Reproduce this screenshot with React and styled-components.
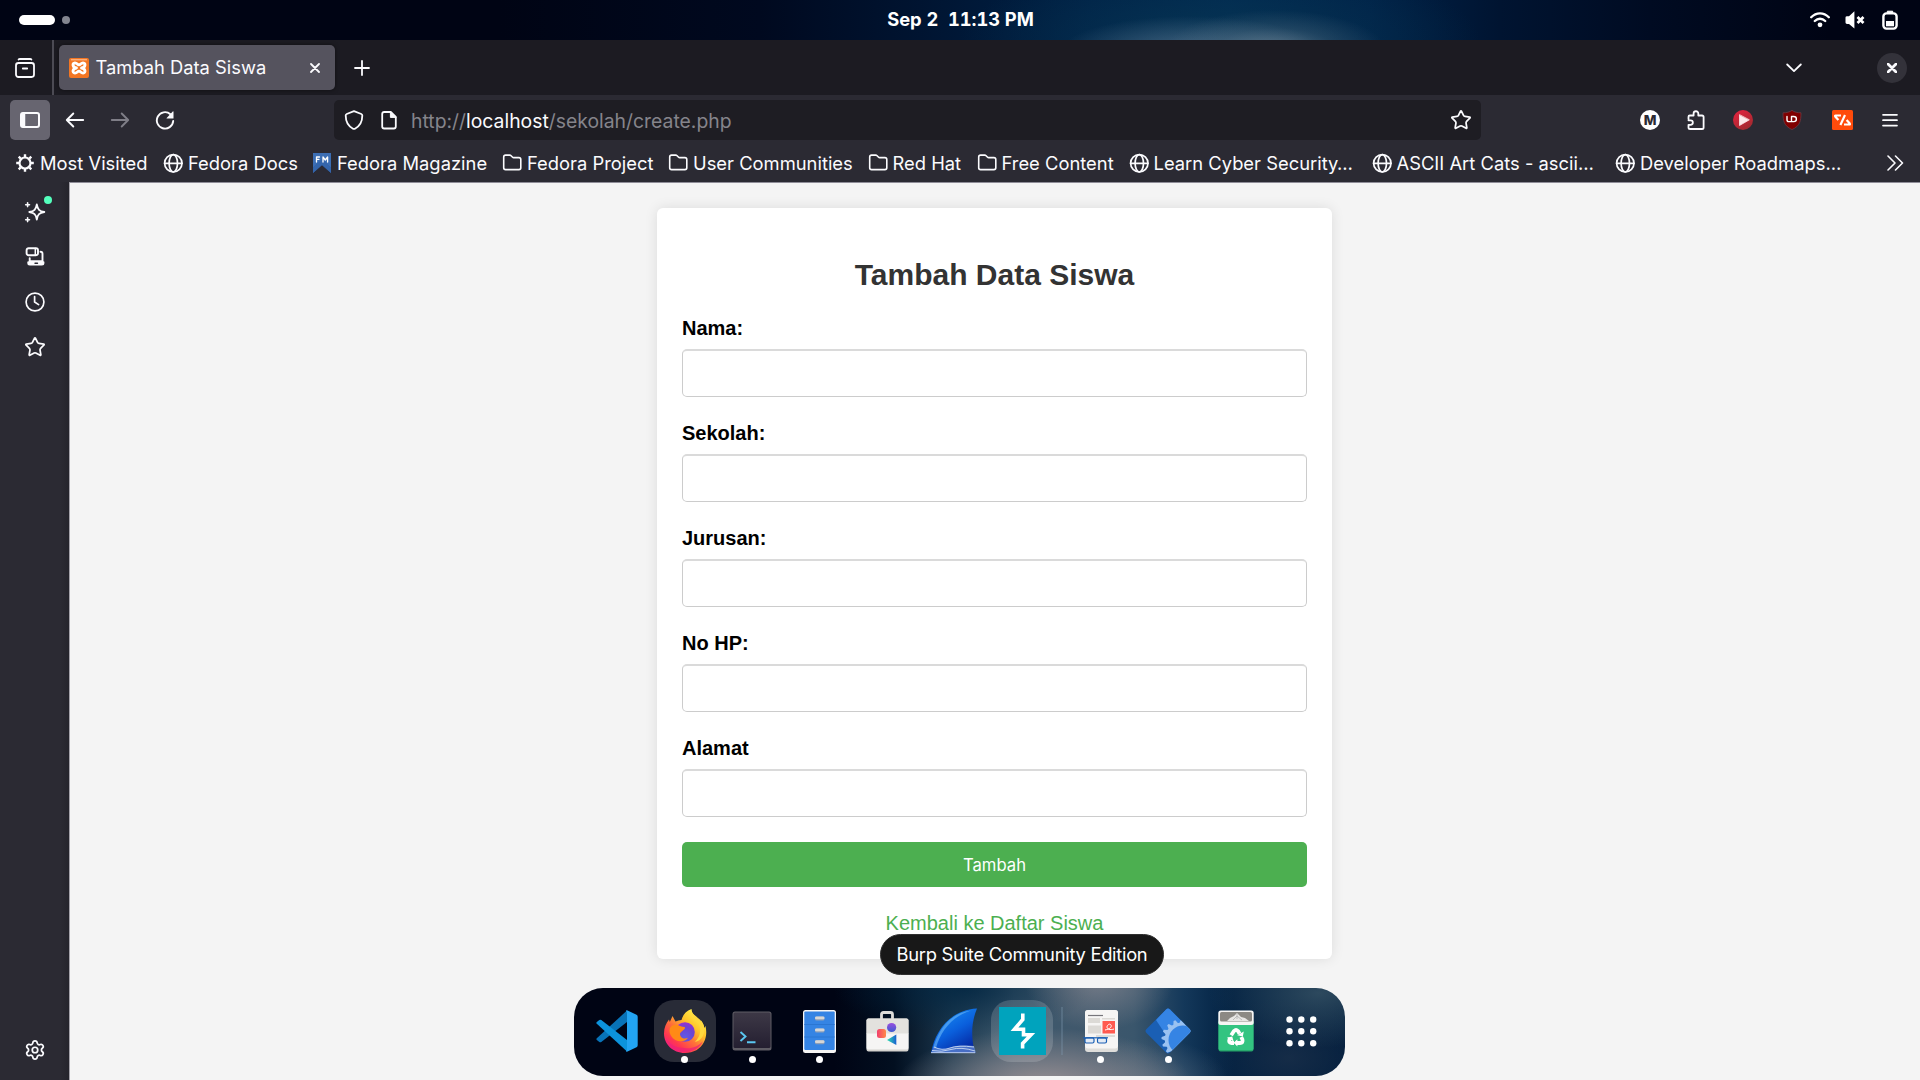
import React from "react";
import styled, { createGlobalStyle, css } from "styled-components";
import { Star, Settings } from "lucide-react";

const GlobalStyle = createGlobalStyle`
  * { box-sizing: border-box; }
  body { margin: 0; background: #000414; overflow: hidden; }
  svg { display: block; flex: none; }
`;

const uiFont = `Inter, "Noto Sans", sans-serif`;
const pageFont = `"Liberation Sans", Arial, sans-serif`;

/* ---------- desktop ---------- */

const Desktop = styled.div`
  position: relative;
  width: 1920px;
  height: 1080px;
  overflow: hidden;
  display: flex;
  flex-direction: column;
  font-family: ${uiFont};
`;

const TopBar = styled.header`
  height: 40px;
  flex: none;
  display: grid;
  grid-template-columns: 1fr auto 1fr;
  align-items: center;
  padding: 0 22px 0 23px;
  color: #fff;
  background:
    radial-gradient(ellipse 110px 40px at 1275px 50px, rgba(112, 134, 150, 0.75), rgba(90, 115, 135, 0.3) 55%, transparent),
    radial-gradient(ellipse 130px 36px at 1190px 52px, rgba(90, 118, 145, 0.75), transparent),
    radial-gradient(ellipse 260px 80px at 1220px 40px, rgba(8, 56, 84, 0.75), transparent),
    linear-gradient(90deg, #000414 0, #000414 500px, #00091f 760px, #001431 920px, #002247 1090px, #002850 1230px, #002248 1370px, #001431 1500px, #000b22 1650px, #000414 1830px);
`;

const Workspaces = styled.div`
  display: flex;
  align-items: center;
  gap: 7px;
  margin-left: -4px;
`;

const WorkspaceDot = styled.span`
  width: ${(p) => (p.$active ? 36 : 8)}px;
  height: ${(p) => (p.$active ? 10 : 8)}px;
  border-radius: 5px;
  background: ${(p) => (p.$active ? "#fff" : "#82858f")};
`;

const Clock = styled.time`
  font-size: 18.33px;
  font-weight: 700;
  letter-spacing: -0.06px;
  line-height: 38px;
  font-variant-numeric: tabular-nums;
  white-space: pre;
  padding-bottom: 2px;
`;

const StatusIcons = styled.div`
  display: flex;
  justify-content: flex-end;
  align-items: center;
  gap: 15px;
  svg:last-child { margin-left: 2px; }
`;

/* ---------- browser chrome ---------- */

const TabStrip = styled.div`
  height: 55px;
  flex: none;
  display: flex;
  align-items: center;
  background: #1c1b22;
  color: #fbfbfe;
`;

const ArchiveCell = styled.div`
  width: 54px;
  height: 55px;
  display: flex;
  align-items: center;
  padding-left: 15px;
  border-right: 2px solid #4c4b54;
`;

const Tab = styled.div`
  width: 276px;
  height: 45px;
  margin-left: 5px;
  padding: 0 15px 0 10px;
  display: flex;
  align-items: center;
  border-radius: 5px;
  background: #55535e;
  box-shadow: 0 0 4px rgba(0, 0, 0, 0.5);
`;

const TabTitle = styled.span`
  flex: 1;
  margin-left: 6.5px;
  padding-bottom: 1px;
  font-size: 18.33px;
  line-height: 26px;
  white-space: nowrap;
`;

const NewTab = styled.div`
  flex: 1;
  padding-left: 19px;
`;

const CloseWindow = styled.div`
  width: 30px;
  height: 30px;
  margin: 0 13px 0 75px;
  border-radius: 50%;
  background: #33323a;
  display: grid;
  place-items: center;
`;

const NavBar = styled.div`
  height: 50px;
  flex: none;
  display: flex;
  align-items: center;
  padding: 0 8px 0 10px;
  background: #2b2a33;
  color: #fbfbfe;
`;

const NavButton = styled.div`
  width: 40px;
  height: 40px;
  margin-right: 5px;
  display: grid;
  place-items: center;
  border-radius: 5px;
  background: ${(p) => (p.$active ? "#676570" : "transparent")};
  color: ${(p) => (p.$disabled ? "#7f7e87" : "inherit")};
`;

const UrlBar = styled.div`
  width: 1147px;
  height: 40px;
  margin-left: 144px;
  padding: 0 9px 0 10px;
  display: flex;
  align-items: center;
  border-radius: 5px;
  background: #1e1d23;
`;

const UrlText = styled.span`
  flex: 1;
  margin-left: 14px;
  padding-top: 1px;
  font-size: 19.36px;
  line-height: 26px;
  color: #85848b;
  white-space: nowrap;
  b { font-weight: 400; color: #fbfbfe; }
`;

const Extensions = styled.div`
  flex: 1;
  display: flex;
  align-items: center;
  justify-content: flex-end;
`;

const ExtSlot = styled.div`
  width: ${(p) => p.$w}px;
  margin-left: ${(p) => p.$ml || 0}px;
  display: grid;
  place-items: center;
`;

const LetterBadge = styled.span`
  width: 20px;
  height: 20px;
  border-radius: 50%;
  background: #fff;
  color: #2b2a33;
  font-size: 13.5px;
  font-weight: 800;
  line-height: 20px;
  text-align: center;
`;

const Bookmarks = styled.div`
  height: 37px;
  flex: none;
  display: flex;
  align-items: center;
  padding: 0 16px 1px 15px;
  background: #2b2a33;
  color: #fbfbfe;
`;

const Bookmark = styled.div`
  width: ${(p) => p.$w}px;
  flex: none;
  display: flex;
  align-items: center;
  gap: 5px;
  font-size: 18.33px;
  letter-spacing: 0.02px;
  line-height: 26px;
  white-space: nowrap;
`;

const BookmarkIcon = styled.span`
  width: 20px;
  flex: none;
  display: grid;
  place-items: center;
`;

const Overflow = styled.div`
  flex: 1;
  display: flex;
  justify-content: flex-end;
`;

const Body = styled.div`
  flex: 1;
  min-height: 0;
  display: flex;
  background: #2b2a33;
`;

const Sidebar = styled.nav`
  width: 69px;
  flex: none;
  display: flex;
  flex-direction: column;
  align-items: center;
  padding: 8px 0 8px 0;
  color: #fbfbfe;
  background: linear-gradient(90deg, #2b2a33 60px, #25242c 69px);
`;

const SideItem = styled.div`
  position: relative;
  width: 40px;
  height: 44.8px;
  display: grid;
  place-items: center;
  ${(p) => p.$last && css`margin-top: auto;`}
`;

const NoticeDot = styled.span`
  position: absolute;
  top: 6px;
  right: 3px;
  width: 8px;
  height: 8px;
  border-radius: 50%;
  background: #54ffbd;
`;

/* ---------- web page ---------- */

const Page = styled.main`
  flex: 1;
  display: flex;
  justify-content: center;
  align-items: flex-start;
  padding: 25px 1px 0 0;
  border-top: 1px solid #8f8d98;
  border-left: 1px solid #a5a3ab;
  background: #f4f4f4;
  font-family: ${pageFont};
`;

const Card = styled.form`
  width: 675px;
  height: 751px;
  padding: 25px;
  background: #fff;
  border-radius: 6px;
  box-shadow: 0 0 12.5px rgba(0, 0, 0, 0.1);
`;

const Title = styled.h2`
  margin: 25px 0;
  font-size: 30px;
  line-height: 34px;
  font-weight: 700;
  text-align: center;
  color: #333;
`;

const Field = styled.div`
  height: 105px;
`;

const Label = styled.label`
  display: block;
  padding-bottom: 10px;
  font-size: 20px;
  line-height: 22px;
  font-weight: 700;
  color: #000;
`;

const Input = styled.input`
  display: block;
  width: 100%;
  height: 48px;
  padding: 12px;
  border: 1px solid #ccc;
  border-top: 2px solid #dadada;
  border-radius: 5px;
  background: #fff;
  outline: none;
`;

const Submit = styled.button`
  display: block;
  width: 100%;
  height: 45px;
  border: 0;
  border-radius: 5px;
  background: #4caf50;
  color: #fff;
  font-family: ${uiFont};
  font-size: 16.67px;
  line-height: 20px;
`;

const BackLink = styled.a`
  display: block;
  margin-top: 25px;
  font-size: 20px;
  line-height: 23px;
  text-align: center;
  color: #4caf50;
  text-decoration: none;
`;

/* ---------- dock ---------- */

const DockLayer = styled.div`
  position: absolute;
  left: 574px;
  top: 988px;
`;

const Dock = styled.div`
  width: 771px;
  height: 88px;
  padding: 0 9.5px;
  display: flex;
  align-items: center;
  border-radius: 29px;
  background:
    radial-gradient(ellipse 75px 50px at 525px -8px, rgba(130, 132, 142, 0.8), transparent),
    radial-gradient(ellipse 150px 60px at 470px 100px, rgba(160, 148, 150, 0.95), rgba(140, 136, 142, 0.6) 50%, transparent),
    radial-gradient(ellipse 80px 45px at 575px 95px, rgba(95, 112, 128, 0.7), transparent),
    radial-gradient(ellipse 110px 55px at 745px 5px, rgba(60, 88, 105, 0.75), transparent),
    radial-gradient(ellipse 90px 60px at 715px 70px, rgba(30, 50, 75, 0.7), transparent),
    radial-gradient(ellipse 130px 45px at 390px 0, rgba(2, 38, 66, 0.85), transparent),
    linear-gradient(90deg, #000414 0, #000414 260px, #020f20 320px, #1d3a50 380px, #3c586c 440px, #40586c 500px, #3a566c 560px, #14385a 610px, #001f40 660px, #001c3c 771px);
`;

const DockItem = styled.div`
  position: relative;
  width: ${(p) => p.$w || 67.5}px;
  flex: none;
  height: 88px;
  display: grid;
  place-items: center;
`;

const DockTile = styled.div`
  width: 62px;
  height: 62px;
  margin-bottom: 2px;
  display: grid;
  place-items: center;
  border-radius: 20px;
  background: ${(p) => p.$tint || "transparent"};
`;

const RunningDot = styled.span`
  position: absolute;
  left: calc(50% - 3.5px);
  top: 68px;
  width: 7px;
  height: 7px;
  border-radius: 50%;
  background: #fff;
`;

const DockDivider = styled.div`
  width: 2px;
  height: 48px;
  margin: 0 4.5px 2px 4.5px;
  background: rgba(130, 155, 180, 0.3);
`;

const Tooltip = styled.div`
  position: absolute;
  left: 306px;
  top: -54px;
  width: 284px;
  height: 41px;
  border-radius: 20.5px;
  border: 1px solid #303030;
  background: #181818;
  color: #fff;
  font-size: 18.33px;
  letter-spacing: -0.27px;
  line-height: 38px;
  text-align: center;
  white-space: nowrap;
`;

/* ---------- icons ---------- */

const Svg = ({ w = 20, h = 20, vb, children, sw = 1.6 }) => (
  <svg width={w} height={h} viewBox={vb || `0 0 ${w} ${h}`} fill="none" stroke="currentColor" strokeWidth={sw} strokeLinecap="round" strokeLinejoin="round">
    {children}
  </svg>
);

const WifiIcon = () => (
  <Svg sw={2.3}>
    <path d="M1.2 7.2C6.2 2 13.8 2 18.8 7.2M4.8 11c3-3 7.4-3 10.4 0" />
    <circle cx="10" cy="14.8" r="2.4" fill="currentColor" stroke="none" />
  </Svg>
);
const MuteIcon = () => (
  <Svg>
    <path d="M.5 7.6Q.5 6.2 2 6.2h2L9.4 1.2V18.6L4 14H2Q.5 14 .5 12.6z" fill="currentColor" stroke="none" />
    <path d="M12.500 7l6 6M18.500 7l-6 6" strokeWidth="2.7" strokeLinecap="butt" />
  </Svg>
);
const BatteryIcon = () => (
  <Svg w={16} sw={2.4}>
    <rect x="1.4" y="3.4" width="13.2" height="15.2" rx="3" />
    <path d="M5.3 3V1.2h5.4V3z" fill="currentColor" strokeWidth="1" />
    <rect x="4" y="11" width="8" height="5.3" fill="currentColor" stroke="none" />
  </Svg>
);
const ArchiveIcon = () => (
  <Svg sw={1.8}>
    <path d="M3.6 1.6Q4 1 5 1h10q1 0 1.400.6M7.8 10.5h4.4" />
    <rect x="1" y="5" width="18" height="14" rx="2.4" />
  </Svg>
);
const XamppIcon = () => (
  <Svg>
    <rect width="20" height="20" rx="2" fill="#f37623" stroke="none" />
    <path d="M2.4 1.8h15.2" stroke="#ffc69d" strokeWidth="1" />
    <path d="M7.500 10C3.500 9.600 2.800 5 6 4.800c2.200 0 2.400 2 4 2s1.800-2 4-2c3.200.2 2.500 4.800-1.500 5.200 4 .4 4.700 4.900 1.500 5.100-2.200 0-2.400-1.900-4-1.900s-1.800 1.900-4 1.900C2.800 14.900 3.500 10.400 7.500 10z" stroke="#fff" strokeWidth="2.800" />
  </Svg>
);
const CloseIcon = ({ s = 10, sw = 1.8 }) => (
  <Svg w={s} h={s} vb="0 0 10 10" sw={sw}><path d="M1 1l8 8M9 1L1 9" /></Svg>
);
const PlusIcon = () => <Svg w={16} h={16} sw={1.8}><path d="M8 1v14M1 8h14" /></Svg>;
const ChevronIcon = () => <Svg w={16} h={10} sw={1.8}><path d="M1.200 1.500l6.800 6.600 6.800-6.600" /></Svg>;
const PanelIcon = () => (
  <Svg w={20} h={16} sw={2}>
    <rect x="1" y="1" width="18" height="14" rx="2" />
    <path d="M1 2.500Q1 1 2.500 1H5v14H2.500Q1 15 1 13.500z" fill="currentColor" strokeWidth="0.500" />
  </Svg>
);
const BackIcon = () => <Svg w={20} h={16} sw={1.9}><path d="M18.200 8H2M8.300 1.500L1.800 8l6.500 6.500" /></Svg>;
const ForwardIcon = () => <Svg w={20} h={16} sw={1.9}><path d="M1.800 8H18M11.700 1.500L18.200 8l-6.500 6.500" /></Svg>;
const ReloadIcon = () => (
  <Svg sw={1.9}>
    <path d="M15.400 4.200A8.200 8.200 0 1 0 18.200 11" />
    <path d="M18.500 1.800v6.400q0 .3-.3.300h-6.200q-.8 0-.3-.500l6-6.400q.8-.6.800.2z" fill="currentColor" stroke="none" />
  </Svg>
);
const ShieldIcon = () => (
  <Svg sw={1.8}>
    <path d="M10 1.200L17.300 4q1 .4 1 1.500c0 6-2.300 10.500-7.300 13.200q-1 .5-2 0C4 16 1.700 11.500 1.700 5.500q0-1.100 1-1.500z" />
  </Svg>
);
const PageIcon = () => (
  <Svg w={16} sw={1.8}>
    <path d="M3.200 2h6.600L14.800 7v9.500q0 2-2 2H3.200q-2 0-2-2V4q0-2 2-2z" />
    <path d="M9.400 2v5.400h5.400z" fill="currentColor" strokeWidth="1" />
  </Svg>
);
const PuzzleIcon = () => (
  <Svg w={18} sw={1.8}>
    <path d="M1.500 9V6.800Q1.500 5.500 2.800 5.500H6.600V3.600a2.300 2.300 0 0 1 4.700 0V5.500H15q1.600 0 1.600 1.600V17.400q0 1.600-1.600 1.600H3.100q-1.600 0-1.600-1.600V14.800H3.600a2.200 2.200 0 0 0 0-4.500H1.500" />
  </Svg>
);
const PlayIcon = () => (
  <Svg>
    <defs><linearGradient id="play" x1="0" y1="0" x2="0.600" y2="1"><stop offset="0" stopColor="#e8213f" /><stop offset="1" stopColor="#a32a30" /></linearGradient></defs>
    <circle cx="10" cy="10" r="10" fill="url(#play)" stroke="none" />
    <path d="M6.500 5v10.500L16 10z" fill="#fbe9ea" stroke="#fbe9ea" strokeWidth=".8" />
  </Svg>
);
const BlockIcon = () => (
  <Svg>
    <path d="M10 .4C7.500 2.200 4.500 2.800 1 2.800c0 8 .8 13 9 16.800 8.200-3.800 9-8.800 9-16.800-3.500 0-6.500-.6-9-2.400z" fill="#800000" stroke="#6a3a44" strokeWidth=".8" />
    <path d="M5 6.500v3.200q0 1.900 1.900 1.900H9.500V6.500h2.200q2.700 0 2.700 2.500t-2.700 2.600H9.500" stroke="#fff" strokeWidth="1.400" />
  </Svg>
);
const ProxyIcon = () => (
  <Svg w={21}>
    <rect width="21" height="20" rx="1.500" fill="#ff4b0b" stroke="none" />
    <path d="M9 5.500H3.600q-.8 0-.4.900L6.400 10M13 5L8.400 15M12 14.500h5.400q.8 0 .4-.9L14.600 10" stroke="#fff" strokeWidth="2.200" strokeLinecap="butt" />
  </Svg>
);
const MenuIcon = () => <Svg w={16} h={14} sw={1.7}><path d="M1 1.800h14M1 7.200h14M1 12.600h14" /></Svg>;
const CogIcon = () => (
  <Svg>
    <circle cx="10" cy="10" r="5.500" strokeWidth="2.200" />
    <path d="M10 4V1.200M10 16v2.800M4 10H1.200M16 10h2.800M5.700 5.700l-2-2M14.300 14.300l2 2M5.700 14.300l-2 2M14.300 5.700l2-2" strokeWidth="2.400" strokeLinecap="butt" />
  </Svg>
);
const GlobeIcon = () => (
  <Svg sw={1.7}>
    <circle cx="10.300" cy="10.300" r="8.700" />
    <ellipse cx="10.300" cy="10.300" rx="4.200" ry="8.700" />
    <path d="M1.600 10.300h17.400" />
  </Svg>
);
const FolderIcon = () => (
  <Svg sw={1.6}>
    <path d="M3.600 2.100h4q.9 0 1.500.6l1.500 1.500q.4.400 1 .4h5.300q1.900 0 1.900 1.900v8.200q0 1.900-1.900 1.900H3.600q-1.900 0-1.900-1.900V4q0-1.900 1.900-1.900z" />
  </Svg>
);
const RibbonIcon = () => (
  <Svg w={18}>
    <path d="M0 0h18v20L9 12 0 20z" fill="#3c6eb4" stroke="none" />
    <path d="M0 20v-5l9-8 9 8v5l-9-8z" fill="#294172" stroke="none" />
    <path d="M0 14.500L9 6l9 8.500V20L9 12 0 20z" fill="#3465ab" stroke="none" />
    <path d="M3.500 9V4H6.500M3.500 6.300h2.500M10 9V4l2.300 3 2.300-3V9" stroke="#fff" strokeWidth="1.300" />
  </Svg>
);
const DoubleChevron = () => <Svg w={18} h={16} sw={1.6}><path d="M2 1l7 7-7 7M9.500 1l7 7-7 7" /></Svg>;
const SparkIcon = () => (
  <Svg w={22} h={22} sw={1.8}>
    <path d="M12.800 3.500c.9 5 2.500 6.600 7.500 7.500-5 .9-6.600 2.500-7.500 7.500-.9-5-2.500-6.600-7.500-7.500 5-.9 6.600-2.500 7.500-7.500z" />
    <path d="M3.600 1.800v3.800M1.700 3.700h3.800M3.600 16.800v3.800M1.700 18.700h3.800" strokeWidth="1.600" />
  </Svg>
);
const DevicesIcon = () => (
  <Svg sw={1.9}>
    <rect x="1.600" y="1.200" width="11.400" height="7" rx="2" />
    <path d="M10.300 1.500v6.400" strokeWidth="1.500" />
    <path d="M15.500 4.800q2 0 2 2v7.400H4.700v-3" />
    <path d="M3.600 14.300h15q.8 0 .8.800v1q0 2.500-2.500 2.500H4.800q-2.500 0-2.500-2.500v-1q0-.8 1.300-.8z" fill="currentColor" stroke="none" />
    <path d="M10 16.200h2.500" stroke="#2b2a33" strokeWidth="1.400" />
  </Svg>
);
const HistoryIcon = () => (
  <Svg sw={1.7}><circle cx="10" cy="10" r="8.900" /><path d="M9.600 4.500V10l4 2.600" /></Svg>
);

/* ---------- dock artwork ---------- */

const Art = ({ w, h, children }) => <svg width={w} height={h} viewBox={`0 0 ${w} ${h}`}>{children}</svg>;

const VsCodeArt = () => (
  <Art w={42} h={42}>
    <path d="M31 .5L.8 28.200q-.9.900 0 1.800l2.500 2q1 .7 2 0L31 12z" fill="#0873b8" />
    <path d="M31 41.500L.8 13.800q-.9-.9 0-1.800l2.500-2q1-.7 2 0L31 30z" fill="#0c93dc" />
    <path d="M31 .3l9.500 4.500q1.200.6 1.200 2v28.400q0 1.400-1.200 2L31 41.700q-.6.200-1-.4l1-2V2.700L30 .7q.4-.6 1-.4z" fill="#22a4f2" />
  </Art>
);
const FirefoxArt = () => (
  <Art w={44} h={46}>
    <defs>
      <linearGradient id="fx" x1="0.850" y1="0.100" x2="0.150" y2="0.950">
        <stop offset="0" stopColor="#fff44f" /><stop offset=".3" stopColor="#ffc429" /><stop offset=".55" stopColor="#ff7139" /><stop offset=".8" stopColor="#ff3750" /><stop offset="1" stopColor="#f0198a" />
      </linearGradient>
      <radialGradient id="fxp" cx=".5" cy=".75" r=".8"><stop offset="0" stopColor="#5f5ae8" /><stop offset=".6" stopColor="#6e43d0" /><stop offset="1" stopColor="#a02bd4" /></radialGradient>
    </defs>
    <path d="M9.500 8l3 5.500q3-1.500 6-1.500C20 6.500 23 3 28.500 1c.3 4 2.500 6 5 8.500 1.500 1.500 3 3.500 4 5.500l.6-2.500c1.600 2 3 5.500 3 7.500l1.400-2C43.800 23.500 43.500 29 41 34 37.500 41 30.500 45 22 45 9.500 45 1 36 1 25.500c0-6 2-10 5-14l.8 2.500z" fill="url(#fx)" />
    <path d="M3 30c3 9 10 14 19 14 8 0 15-4 18-11-5 6-12 8-18 7C12 40 6 36 3 30z" fill="#ee2277" opacity=".75" />
    <circle cx="22" cy="24" r="9.800" fill="url(#fxp)" />
    <path d="M7 20c2-4 7-4 10-2 2 1.200 5 .3 5 1.800 0 2-4 3.500-5 6 0 4 4 6 8 4-3 5-13 5-17-2-1.500-3-2-5-1-7.800z" fill="#ff8a16" />
    <path d="M28 3c1 7 8 9 9 17 1 6-2 11-5 14 8-2 10-9 9-16-1-3-3-6-6-8-3-3-6-4-7-7z" fill="#ffd83d" />
  </Art>
);
const TerminalArt = () => (
  <Art w={40} h={40}>
    <rect x="0.500" y="0.500" width="39" height="39" rx="2.500" fill="#5e5c64" />
    <rect x="1.500" y="1.500" width="37" height="35.500" rx="1.500" fill="url(#term)" />
    <defs><linearGradient id="term" x2="0" y2="1"><stop stopColor="#3d3846" /><stop offset="1" stopColor="#241f31" /></linearGradient></defs>
    <path d="M8.500 21l5 4.500-5 4.500M15 31.200h8.500" fill="none" stroke="#5ac8f2" strokeWidth="1.900" />
  </Art>
);
const FilesArt = () => (
  <Art w={33} h={43}>
    <rect width="33" height="43" rx="2.500" fill="#f6f5f4" />
    <rect x="1.300" y="1.500" width="30.400" height="38.500" rx="1" fill="#3584e4" />
    <path d="M1.300 14.500h30.400M1.300 27h30.400" stroke="#2b76d2" />
    {[6.5, 18.5, 30.3].map((y) => (
      <g key={y}><rect x="12" y={y} width="9.500" height="4" rx="1.600" fill="#8fa0b8" /><rect x="12" y={y} width="9.500" height="2.800" rx="1.300" fill="#d6d6d6" /></g>
    ))}
  </Art>
);
const SoftwareArt = () => (
  <Art w={43} h={41}>
    <defs><linearGradient id="sw1" x2="1"><stop stopColor="#f2406d" /><stop offset="1" stopColor="#ff8a4a" /></linearGradient><linearGradient id="sw2" x2="0" y2="1"><stop stopColor="#9a4fe0" /><stop offset="1" stopColor="#3c5bd0" /></linearGradient><linearGradient id="sw3" x2="1"><stop stopColor="#2ee0b0" /><stop offset="1" stopColor="#1a5fd0" /></linearGradient></defs>
    <path d="M15.500 9V3.500q0-2 2-2h7q2 0 2 2V9" fill="none" stroke="#deddda" strokeWidth="2.800" />
    <rect x=".5" y="7.500" width="42" height="33" rx="2" fill="#d5d3cf" />
    <path d="M.5 9.500q0-2 2-2h38q2 0 2 2V23H.5z" fill="#e3e2de" />
    <path d="M.5 22.500h42V37q0 1.500-2 1.500h-38q-2 0-2-1.500z" fill="#f6f5f4" />
    <rect x="11" y="18" width="9" height="9" rx="2.500" fill="url(#sw1)" />
    <circle cx="25.600" cy="16.500" r="4.600" fill="url(#sw2)" />
    <path d="M21 29l9.300-5.500v10.500z" fill="url(#sw3)" />
  </Art>
);
const WiresharkArt = () => (
  <Art w={47} h={46}>
    <defs><linearGradient id="fin" x1=".2" y1="0" x2=".8" y2="1"><stop stopColor="#1990f5" /><stop offset=".5" stopColor="#0a5fdc" /><stop offset="1" stopColor="#04209a" /></linearGradient></defs>
    <path d="M0 45C4 22 20 2 46 .5c-6 14-6 30-2 44.500z" fill="url(#fin)" />
    <path d="M2 40C8 20 20 5 40 2.500 22 8 10 22 5 40z" fill="#69b8f8" opacity=".6" />
    <path d="M0 45q1-3 3-6 7 4 15 1 9-4 25-2l2 7z" fill="#5f86d0" opacity=".75" />
    <path d="M3 39q8 4 16 1t24-1M1 42.500q9 2 19-1t24 1.500M0 44.700h44" stroke="#dbe6f7" strokeWidth=".8" fill="none" />
  </Art>
);
const BurpArt = () => (
  <Art w={47} h={48}>
    <rect width="47" height="48" fill="#00a3bd" />
    <path d="M23.800 6.500v6L15.500 22.200h9v5.600h7.500L23.600 36.500v5" fill="none" stroke="#fff" strokeWidth="3.600" strokeLinejoin="miter" />
  </Art>
);
const PapersArt = () => (
  <Art w={36} h={42}>
    <rect x="2" width="33" height="42" rx="3" fill="#deddda" />
    <rect x="2" width="33" height="38.500" rx="3" fill="#f6f5f4" />
    <path d="M5 5.500h15" stroke="#77767b" strokeWidth="1.200" />
    <path d="M5 8h12v5H5zM19 8h13v1.500H19zM5 15.500h13v8H5z" fill="#dcdad6" />
    <rect x="19.500" y="11" width="12.500" height="12.500" fill="#ff5a50" />
    <path d="M22 20c5-1 7-3 6-5s-4 0-4 2 3 3.500 7 2" stroke="#fff" strokeWidth="1" fill="none" />
    <path d="M13 26h19" stroke="#d5d3cf" strokeWidth="1.500" />
    <g fill="#e3ebf5" stroke="#1a5fb4" strokeWidth="1.200"><rect x="2" y="27.800" width="9" height="5.200" rx="1.500" /><rect x="14.500" y="27.800" width="9" height="5.200" rx="1.500" /><path d="M0 27.800h25" fill="none" /></g>
  </Art>
);
const gearPath = (() => {
  const pts = [];
  const teeth = 16;
  for (let i = 0; i < teeth * 4; i++) {
    const r = i % 4 < 2 ? 19.5 : 16.2;
    const a = (i / (teeth * 4)) * Math.PI * 2;
    pts.push(`${(36 + r * Math.cos(a)).toFixed(2)} ${(31 + r * Math.sin(a)).toFixed(2)}`);
  }
  return `M${pts.join("L")}Z`;
})();
const GearArt = () => (
  <Art w={46} h={46}>
    <defs><clipPath id="dia"><path d="M21 1.500q2-2 4 0L44.500 21q2 2 0 4L25 44.500q-2 2-4 0L1.500 25q-2-2 0-4z" /></clipPath></defs>
    <g clipPath="url(#dia)">
      <rect width="46" height="46" fill="#1a5fb4" />
      <path d="M46 0H22L11 12l8 12 20-6z" fill="#3584e4" />
      <path d={gearPath} fill="#99c1f1" />
      <circle cx="38" cy="32" r="14.500" fill="#3584e4" />
    </g>
  </Art>
);
const TrashArt = () => (
  <Art w={36} h={42}>
    <rect x=".5" y="10" width="35" height="31.500" rx="2" fill="#26a269" />
    <rect x=".5" y="10" width="35" height="30.200" rx="2" fill="#33c481" />
    <rect x=".3" y=".5" width="35.400" height="14.500" rx="2.500" fill="#f6f5f4" />
    <rect x="2" y="2" width="32" height="9.500" rx="1.500" fill="#8c8984" />
    <path d="M9 11l3-3 4-2 3-3 4 4 4 1 4 3z" fill="#e8e7e5" />
    <path d="M15 10l4-4 5 4M19 4v5" stroke="#aaa" fill="none" strokeWidth=".7" />
    <g fill="none" stroke="#fff" strokeWidth="3.800">
      <path d="M13.200 25.200L16 21q2-2 4 0l1.600 2.800" />
      <path d="M23.200 27l1.200 2.400q1 3.600-2.400 3.600h-3" />
      <path d="M16 33h-2.400q-3.400-.4-2.200-3.400l.8-1.400" />
    </g>
    <path d="M19.200 25.200l5.600 1.200 1-5zM19.400 29.200v7.200l-3.800-3.600zM8.800 27.800l5.400-1.400 1.500 5z" fill="#fff" />
  </Art>
);
const GridArt = () => (
  <Art w={31} h={31}>
    {[3.5, 15.3, 27.2].map((y) => [3.5, 15.3, 27.2].map((x) => <circle key={`${x}-${y}`} cx={x} cy={y} r="3.200" fill="#fff" />))}
  </Art>
);

/* ---------- data ---------- */

const bookmarks = [
  { label: "Most Visited", icon: <CogIcon />, w: 148 },
  { label: "Fedora Docs", icon: <GlobeIcon />, w: 149 },
  { label: "Fedora Magazine", icon: <RibbonIcon />, w: 190 },
  { label: "Fedora Project", icon: <FolderIcon />, w: 166 },
  { label: "User Communities", icon: <FolderIcon />, w: 199.5 },
  { label: "Red Hat", icon: <FolderIcon />, w: 109 },
  { label: "Free Content", icon: <FolderIcon />, w: 152 },
  { label: "Learn Cyber Security…", icon: <GlobeIcon />, w: 243 },
  { label: "ASCII Art Cats - ascii…", icon: <GlobeIcon />, w: 243.5 },
  { label: "Developer Roadmaps…", icon: <GlobeIcon />, w: 226 },
];

const fields = ["Nama:", "Sekolah:", "Jurusan:", "No HP:", "Alamat"];

const pinned = [
  { id: "code", art: <VsCodeArt /> },
  { id: "firefox", art: <FirefoxArt />, running: true, tint: "#282b37" },
  { id: "terminal", art: <TerminalArt />, running: true },
  { id: "files", art: <FilesArt />, running: true },
  { id: "software", art: <SoftwareArt /> },
  { id: "wireshark", art: <WiresharkArt /> },
  { id: "burp", art: <BurpArt />, tint: "rgba(255,255,255,0.16)" },
];
const recent = [
  { id: "papers", art: <PapersArt />, running: true },
  { id: "gear", art: <GearArt />, running: true },
  { id: "trash", art: <TrashArt /> },
  { id: "apps", art: <GridArt />, w: 63.5 },
];

const renderDock = (items) =>
  items.map((it) => (
    <DockItem key={it.id} $w={it.w}>
      <DockTile $tint={it.tint}>{it.art}</DockTile>
      {it.running && <RunningDot />}
    </DockItem>
  ));

export default function App() {
  return (
    <>
      <GlobalStyle />
      <Desktop>
        <TopBar>
          <Workspaces><WorkspaceDot $active /><WorkspaceDot /></Workspaces>
          <Clock>{"Sep 2  11:13 PM"}</Clock>
          <StatusIcons><WifiIcon /><MuteIcon /><BatteryIcon /></StatusIcons>
        </TopBar>

        <TabStrip>
          <ArchiveCell><ArchiveIcon /></ArchiveCell>
          <Tab>
            <XamppIcon />
            <TabTitle>Tambah Data Siswa</TabTitle>
            <CloseIcon />
          </Tab>
          <NewTab><PlusIcon /></NewTab>
          <ChevronIcon />
          <CloseWindow><CloseIcon sw={2.8} /></CloseWindow>
        </TabStrip>

        <NavBar>
          <NavButton $active><PanelIcon /></NavButton>
          <NavButton><BackIcon /></NavButton>
          <NavButton $disabled><ForwardIcon /></NavButton>
          <NavButton><ReloadIcon /></NavButton>
          <UrlBar>
            <ExtSlot $w={20}><ShieldIcon /></ExtSlot>
            <ExtSlot $w={16} $ml={17}><PageIcon /></ExtSlot>
            <UrlText>http://<b>localhost</b>/sekolah/create.php</UrlText>
            <Star size={22} strokeWidth={1.9} />
          </UrlBar>
          <Extensions>
            <ExtSlot $w={46}><LetterBadge>M</LetterBadge></ExtSlot>
            <ExtSlot $w={46}><PuzzleIcon /></ExtSlot>
            <ExtSlot $w={48}><PlayIcon /></ExtSlot>
            <ExtSlot $w={50}><BlockIcon /></ExtSlot>
            <ExtSlot $w={51}><ProxyIcon /></ExtSlot>
            <ExtSlot $w={44}><MenuIcon /></ExtSlot>
          </Extensions>
        </NavBar>

        <Bookmarks>
          {bookmarks.map((b) => (
            <Bookmark key={b.label} $w={b.w}>
              <BookmarkIcon>{b.icon}</BookmarkIcon>
              {b.label}
            </Bookmark>
          ))}
          <Overflow><DoubleChevron /></Overflow>
        </Bookmarks>

        <Body>
          <Sidebar>
            <SideItem><SparkIcon /><NoticeDot /></SideItem>
            <SideItem><DevicesIcon /></SideItem>
            <SideItem><HistoryIcon /></SideItem>
            <SideItem><Star size={22} strokeWidth={1.9} /></SideItem>
            <SideItem $last><Settings size={22} strokeWidth={1.9} /></SideItem>
          </Sidebar>
          <Page>
            <Card>
              <Title>Tambah Data Siswa</Title>
              {fields.map((f) => (
                <Field key={f}>
                  <Label>{f}</Label>
                  <Input type="text" />
                </Field>
              ))}
              <Submit type="button">Tambah</Submit>
              <BackLink>Kembali ke Daftar Siswa</BackLink>
            </Card>
          </Page>
        </Body>

        <DockLayer>
          <Tooltip>Burp Suite Community Edition</Tooltip>
          <Dock>
            {renderDock(pinned)}
            <DockDivider />
            {renderDock(recent)}
          </Dock>
        </DockLayer>
      </Desktop>
    </>
  );
}
